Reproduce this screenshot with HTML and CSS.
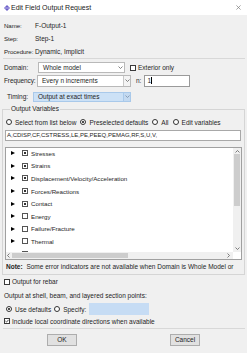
FILE: index.html
```html
<!DOCTYPE html>
<html>
<head>
	<title>Edit Field Output Request</title>
	<meta charset="utf-8"/>
	<link rel="stylesheet" href="styles.css">
</head>
<body>
	<div class="dialog">
		<div class="titlebar">
			<svg class="app-icon" viewBox="0 0 7 7"><path d="M3.5 0 L7 3.5 L3.5 7 L0 3.5 Z" fill="#6b5fc8"/><rect x="1" y="3" width="5" height="1" fill="#c9c3f0"/></svg>
			<span class="title">Edit Field Output Request</span>
			<svg class="close" viewBox="0 0 6 6"><path d="M0.5 0.5 L5.5 5.5 M5.5 0.5 L0.5 5.5" stroke="#777" stroke-width="0.8"/></svg>
		</div>
		<div class="content">
			<div class="info">
				<div class="info-row"><span class="info-label">Name:</span><span>F-Output-1</span></div>
				<div class="info-row"><span class="info-label">Step:</span><span>Step-1</span></div>
				<div class="info-row"><span class="info-label">Procedure:</span><span>Dynamic, Implicit</span></div>
			</div>
			<div class="sep"></div>

			<div class="form-row domain-row">
				<span class="lbl lbl-domain">Domain:</span>
				<div class="combo combo-domain">
					<span class="combo-text">Whole model</span>
					<svg class="chev" viewBox="0 0 5 3"><polyline points="0.5,0.5 2.5,2.5 4.5,0.5" fill="none" stroke="#666" stroke-width="0.8"/></svg>
				</div>
				<span class="check exterior"><span class="box"></span>Exterior only</span>
			</div>

			<div class="form-row">
				<span class="lbl lbl-freq">Frequency:</span>
				<div class="combo combo-freq">
					<span class="combo-text">Every n increments</span>
					<span class="combo-btn"><svg class="chev" viewBox="0 0 5 3"><polyline points="0.5,0.5 2.5,2.5 4.5,0.5" fill="none" stroke="#666" stroke-width="0.8"/></svg></span>
				</div>
				<span class="n-label">n:</span>
				<div class="n-input"><span class="caret">1</span></div>
			</div>

			<div class="form-row timing-row">
				<span class="lbl lbl-timing">Timing:</span>
				<div class="combo combo-timing">
					<span class="combo-text">Output at exact times</span>
					<span class="combo-btn"><svg class="chev" viewBox="0 0 5 3"><polyline points="0.5,0.5 2.5,2.5 4.5,0.5" fill="none" stroke="#7a8fa8" stroke-width="0.8"/></svg></span>
				</div>
			</div>

			<fieldset class="group">
				<legend>Output Variables</legend>
				<div class="radio-row">
					<span class="opt"><span class="radio"></span>Select from list below</span>
					<span class="opt"><span class="radio on"></span>Preselected defaults</span>
					<span class="opt"><span class="radio"></span>All</span>
					<span class="opt"><span class="radio"></span>Edit variables</span>
				</div>
				<div class="var-field">A,CDISP,CF,CSTRESS,LE,PE,PEEQ,PEMAG,RF,S,U,V,</div>
				<div class="tree">
					<div class="tree-items">
						<div class="tree-row"><span class="tri"></span><span class="tbox part"></span>Stresses</div>
						<div class="tree-row"><span class="tri"></span><span class="tbox part"></span>Strains</div>
						<div class="tree-row"><span class="tri"></span><span class="tbox part"></span>Displacement/Velocity/Acceleration</div>
						<div class="tree-row"><span class="tri"></span><span class="tbox part"></span>Forces/Reactions</div>
						<div class="tree-row"><span class="tri"></span><span class="tbox part"></span>Contact</div>
						<div class="tree-row"><span class="tri"></span><span class="tbox"></span>Energy</div>
						<div class="tree-row"><span class="tri"></span><span class="tbox"></span>Failure/Fracture</div>
						<div class="tree-row"><span class="tri"></span><span class="tbox"></span>Thermal</div>
						<div class="tree-row"><span class="tri"></span><span class="tbox"></span></div>
					</div>
					<div class="vscroll">
						<svg class="sarrow" viewBox="0 0 5 3"><polyline points="0.5,2.5 2.5,0.5 4.5,2.5" fill="none" stroke="#606060" stroke-width="0.8"/></svg>
						<div class="vthumb"></div>
						<svg class="sarrow" viewBox="0 0 5 3"><polyline points="0.5,0.5 2.5,2.5 4.5,0.5" fill="none" stroke="#606060" stroke-width="0.8"/></svg>
					</div>
					<div class="hscroll">
						<svg class="harrow" viewBox="0 0 3 5"><polyline points="2.5,0.5 0.5,2.5 2.5,4.5" fill="none" stroke="#606060" stroke-width="0.8"/></svg>
						<div class="hthumb"></div>
						<svg class="harrow" viewBox="0 0 3 5"><polyline points="0.5,0.5 2.5,2.5 0.5,4.5" fill="none" stroke="#606060" stroke-width="0.8"/></svg>
					</div>
					<div class="corner"></div>
				</div>
				<div class="note"><b>Note:</b> Some error indicators are not available when Domain is Whole Model or</div>
			</fieldset>

			<div class="plain-row rebar-row"><span class="box"></span>Output for rebar</div>
			<div class="plain-row shell-label">Output at shell, beam, and layered section points:</div>
			<div class="plain-row points-row">
				<span class="opt"><span class="radio on"></span>Use defaults</span>
				<span class="opt"><span class="radio"></span>Specify:</span>
				<div class="specify-input"></div>
			</div>
			<div class="plain-row"><span class="box checked"><svg viewBox="0 0 4 4"><polyline points="0.4,2 1.5,3.1 3.6,0.8" fill="none" stroke="#222" stroke-width="0.8"/></svg></span>Include local coordinate directions when available</div>
			<div class="sep bottom-sep"></div>
			<div class="buttons">
				<span class="btn">OK</span>
				<span class="btn">Cancel</span>
			</div>
		</div>
	</div>
</body>
</html>
```

FILE: styles.css
```css
body{
	margin: 0;
	background-color: #f0f0f0;
	font-family: "Liberation Sans", Arial, sans-serif;
	font-size: 6.5px;
	color: #1e1e1e;
}
.dialog{
	width: 247px;
	height: 353px;
	overflow: hidden;
	background-color: #f0f0f0;
}
.titlebar{
	height: 15px;
	background-color: #fff;
	display: flex;
	align-items: center;
	padding: 0 6px 0 4px;
	font-size: 7px;
	color: #222;
}
.app-icon{
	width: 6px;
	height: 6px;
	margin-right: 1px;
}
.title{
	flex: 1;
}
.close{
	width: 5px;
	height: 5px;
}
.content{
	padding: 4px 2px 0 4px;
}
.info-row{
	height: 13px;
	display: flex;
	align-items: center;
}
.info-label{
	width: 31px;
	flex-shrink: 0;
	font-size: 6.2px;
	letter-spacing: -0.1px;
	white-space: nowrap;
}
.sep{
	border-top: 1px solid #d8d8d8;
	margin-left: -1px;
}
.form-row{
	height: 13px;
	display: flex;
	align-items: center;
}
.domain-row{
	margin-top: 2px;
}
.timing-row{
	margin-top: 3px;
}
.lbl-domain{
	width: 34px;
}
.lbl-freq{
	width: 33px;
	white-space: nowrap;
	letter-spacing: -0.1px;
}
.lbl-timing{
	width: 26px;
	padding-left: 3px;
}
.combo{
	box-sizing: border-box;
	display: flex;
	align-items: center;
	background-color: #fff;
	border: 1px solid #b9b9b9;
	height: 11px;
}
.combo-text{
	flex: 1;
	padding-left: 4px;
	white-space: nowrap;
}
.chev{
	width: 5px;
	height: 3px;
}
.combo-domain{
	width: 87px;
}
.combo-domain .chev{
	margin-right: 1px;
}
.combo-freq{
	width: 94px;
	height: 12px;
}
.combo-btn{
	width: 6px;
	height: 100%;
	display: flex;
	align-items: center;
	justify-content: center;
	border-left: 1px solid #c8c8c8;
	background-color: #f4f4f4;
}
.combo-timing{
	width: 98px;
	height: 10px;
	background-color: #cce1f6;
	border-color: #a9c9ea;
}
.combo-timing .combo-btn{
	background-color: #c3d9f0;
	border-left-color: #a9c9ea;
}
.check{
	display: flex;
	align-items: center;
}
.exterior{
	margin-left: 5px;
}
.box{
	box-sizing: border-box;
	width: 6px;
	height: 6px;
	border: 1px solid #3a3a3a;
	background-color: #fff;
	margin-right: 2px;
	display: inline-flex;
	align-items: center;
	justify-content: center;
}
.box svg{
	width: 4px;
	height: 4px;
}
.n-label{
	margin-left: 5px;
}
.n-input{
	box-sizing: border-box;
	width: 46px;
	height: 12px;
	margin-left: 3px;
	background-color: #fff;
	border: 1px solid #9a9a9a;
	display: flex;
	align-items: center;
	padding-left: 2px;
}
.caret{
	border-right: 1px solid #000;
}
.group{
	box-sizing: border-box;
	width: 243px;
	margin: 2px 0 0 -2px;
	padding: 0 2px;
	border: 1px solid #d5d5d5;
}
.group legend{
	margin-left: 5px;
	padding: 0 1px;
	line-height: 8px;
}
.radio-row{
	height: 14px;
	margin-top: 2px;
	display: flex;
	align-items: center;
	padding-left: 1px;
}
.opt{
	display: flex;
	align-items: center;
	margin-right: 4px;
	white-space: nowrap;
}
.radio{
	box-sizing: border-box;
	width: 6px;
	height: 6px;
	border: 1px solid #333;
	border-radius: 50%;
	background-color: #fff;
	margin-right: 3px;
	display: inline-flex;
	align-items: center;
	justify-content: center;
}
.radio.on::after{
	content: "";
	width: 2px;
	height: 2px;
	border-radius: 50%;
	background-color: #111;
}
.var-field{
	box-sizing: border-box;
	width: 236px;
	height: 11px;
	margin-top: 1px;
	background-color: #fff;
	border: 1px solid #a8a8a8;
	padding-left: 1px;
	line-height: 9px;
	font-size: 6px;
	white-space: nowrap;
	overflow: hidden;
}
.tree{
	box-sizing: border-box;
	width: 237px;
	height: 113px;
	margin-top: 6px;
	border: 1px solid #a0a0a0;
	background-color: #fff;
	display: grid;
	grid-template-columns: 1fr 8px;
	grid-template-rows: 1fr 7px;
	overflow: hidden;
}
.tree-items{
	overflow: hidden;
}
.tree-row{
	height: 12.6px;
	display: flex;
	align-items: center;
	white-space: nowrap;
	font-size: 6.2px;
}
.tree-row:first-child{
	margin-top: -1px;
}
.tri{
	width: 0;
	height: 0;
	border-left: 4px solid #000;
	border-top: 2.5px solid transparent;
	border-bottom: 2.5px solid transparent;
	margin-left: 5px;
	margin-right: 7px;
}
.tbox{
	box-sizing: border-box;
	width: 6px;
	height: 6px;
	border: 1px solid #555;
	margin-right: 3px;
	display: inline-flex;
	align-items: center;
	justify-content: center;
}
.tbox.part::after{
	content: "";
	width: 2px;
	height: 2px;
	background-color: #333;
}
.vscroll{
	background-color: #f0f0f0;
	display: flex;
	flex-direction: column;
	align-items: center;
	padding: 2px 0;
}
.sarrow{
	width: 5px;
	height: 3px;
}
.vthumb{
	width: 6px;
	height: 52px;
	margin: 1px 0 auto;
	background-color: #cdcdcd;
}
.hscroll{
	background-color: #f0f0f0;
	display: flex;
	align-items: center;
	padding: 0 3px 0 1px;
}
.harrow{
	width: 3px;
	height: 5px;
}
.hthumb{
	width: 116px;
	height: 5px;
	margin: 0 auto 0 2px;
	background-color: #cdcdcd;
}
.corner{
	background-color: #fff;
}
.note{
	height: 14px;
	line-height: 14px;
	white-space: nowrap;
	overflow: hidden;
	padding-left: 1px;
}
.note b{
	margin-right: 2px;
}
.plain-row{
	height: 12px;
	display: flex;
	align-items: center;
	white-space: nowrap;
}
.rebar-row{
	height: 11px;
	margin-top: 1px;
}
.shell-label{
	margin-top: 2px;
}
.points-row{
	margin-top: 2px;
	padding-left: 2px;
}
.points-row .opt{
	margin-right: 3px;
}
.specify-input{
	width: 60px;
	height: 12px;
	background-color: #c6dcf4;
}
.bottom-sep{
	margin-top: 1px;
}
.buttons{
	display: flex;
	margin-top: 5px;
	padding-left: 43px;
	gap: 93px;
}
.btn{
	box-sizing: border-box;
	width: 30px;
	height: 12px;
	line-height: 10px;
	text-align: center;
	background-color: #e1e1e1;
	border: 1px solid #adadad;
}
```
